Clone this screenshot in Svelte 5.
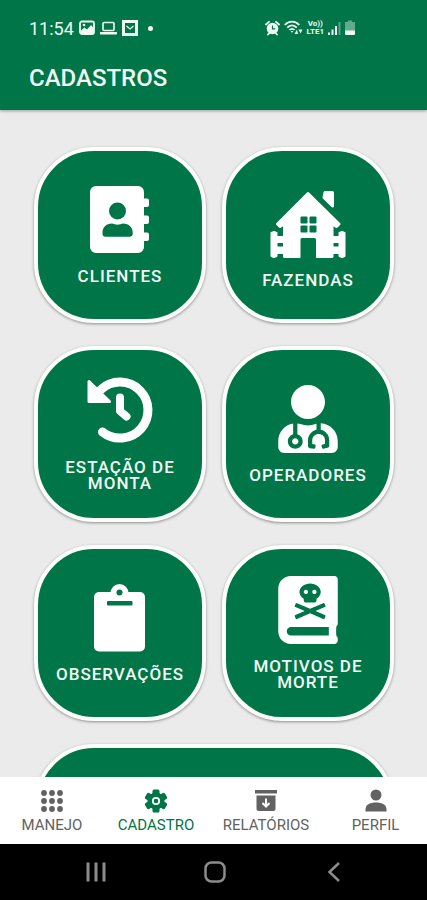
<script>
  const cards = [
    { id: 'clientes', label: 'CLIENTES' },
    { id: 'fazendas', label: 'FAZENDAS' },
    { id: 'estacao', label: 'ESTAÇÃO DE MONTA' },
    { id: 'operadores', label: 'OPERADORES' },
    { id: 'observacoes', label: 'OBSERVAÇÕES' },
    { id: 'motivos', label: 'MOTIVOS DE MORTE' }
  ];
  const tabs = [
    { id: 'manejo', label: 'MANEJO' },
    { id: 'cadastro', label: 'CADASTRO' },
    { id: 'relatorios', label: 'RELATÓRIOS' },
    { id: 'perfil', label: 'PERFIL' }
  ];
  let active = $state('cadastro');
</script>

<div class="app">
  <header>
    <div class="status">
      <div class="left">
        <span class="time">11:54</span>
        <svg width="16" height="16" viewBox="0 0 16 16">
          <rect x="1" y="1.5" width="14" height="12.5" rx="2" fill="none" stroke="currentColor" stroke-width="1.8" />
          <path d="M2 13V10.500l3.500-3 2.500 2 4-4.500 2.500 3V13z" fill="currentColor" />
          <circle cx="5" cy="5" r="1.300" fill="currentColor" />
        </svg>
        <svg width="17" height="16" viewBox="0 0 17 16">
          <rect x="3" y="2.500" width="11" height="8" rx="1" fill="none" stroke="currentColor" stroke-width="1.600" />
          <path d="M0 12h17v2.500H0z" fill="currentColor" />
        </svg>
        <svg width="16" height="16" viewBox="0 0 16 16">
          <rect x="1.500" y="1.500" width="13" height="13" fill="none" stroke="currentColor" stroke-width="3" />
          <path d="M4.500 6l3.500 3 3.500-3" fill="none" stroke="currentColor" stroke-width="1.200" />
        </svg>
        <i class="dot"></i>
      </div>
      <div class="right">
        <svg width="15" height="16" viewBox="0 0 15 16">
          <circle cx="7.500" cy="8.500" r="5.800" fill="currentColor" />
          <path d="M1 4.500L4 1.800M14 4.500L11 1.800M3 14.500l1.800-2M12 14.500l-1.800-2" stroke="currentColor" stroke-width="1.800" stroke-linecap="round" />
          <path d="M7.500 5.500v3.300h2.700" fill="none" stroke="#007548" stroke-width="1.200" />
        </svg>
        <svg width="19" height="16" viewBox="0 0 19 16">
          <g fill="none" stroke="currentColor" stroke-width="1.800">
            <path d="M.8 5c4-4.600 10.400-4.600 14.400 0" />
            <path d="M3.300 7.600c2.700-3 6.700-3 9.400 0" />
            <path d="M5.500 10c1.400-1.600 3.600-1.600 5 0" />
          </g>
          <path d="M6.800 11h2.400L8 13zM10.500 14l2.500-4.500 1 4.500zM14.500 9.500h4l-2 4z" fill="currentColor" />
        </svg>
        <span class="lte">Vo))<br />LTE1</span>
        <svg width="13" height="16" viewBox="0 0 13 16" fill="currentColor">
          <path d="M0 12.500h2V15H0zM3.500 9.500h2V15h-2zM7 6h2v9H7z" />
          <path d="M10.500 2h2v13h-2z" opacity=".35" />
        </svg>
        <svg width="10" height="16" viewBox="0 0 10 16" fill="currentColor">
          <path d="M3 .5h4V2h3v9H0V2h3z" opacity=".4" />
          <path d="M0 10.500h10V14a1 1 0 0 1-1 1H1a1 1 0 0 1-1-1z" />
        </svg>
      </div>
    </div>
    <h1>CADASTROS</h1>
  </header>

  <main>
    {#each cards as card (card.id)}
      <button class="card" type="button">
        {#if card.id === 'clientes'}
          <svg width="68" height="68" viewBox="0 0 68 68">
            <path fill="currentColor" d="M10 0h42a6 6 0 0 1 6 6v6.500h3a2 2 0 0 1 2 2V19a2 2 0 0 1-2 2h-3v8.500h3a2 2 0 0 1 2 2V36a2 2 0 0 1-2 2h-3v8.500h3a2 2 0 0 1 2 2V53a2 2 0 0 1-2 2h-3v6a6 6 0 0 1-6 6H10a6 6 0 0 1-6-6V6a6 6 0 0 1 6-6z" />
            <g fill="#007548">
              <circle cx="31.500" cy="25" r="8.500" />
              <path d="M26 37.500c3.500 1.500 7.500 1.500 11 0 6 0 9.700 4 9.700 9V48c0 1.700-1.300 2.700-3 2.700H19.500c-1.700 0-3-1-3-2.700v-1.500c0-5 3.500-9 9.500-9z" />
            </g>
          </svg>
        {:else if card.id === 'fazendas'}
          <svg width="78" height="76" viewBox="0 0 78 76">
            <g fill="currentColor" stroke="currentColor" stroke-linejoin="round">
              <path stroke-width="3" d="M39 11.500L8.500 42l2.500 2.500 4.500-3V74.500H31V56h16.500v18.500H63v-33l4.500 3L70 42z" />
              <path stroke-width="3" d="M56 10.500h7.500V24L55 15.500z" />
              <path stroke-width="2" d="M2.500 51L5 50l2.500 1v4H14v5H7.500v5.500H14V71H7.500v3L5 75l-2.500-1zM75.500 51L73 50l-2.500 1v4H64v5h6.500v5.500H64V71h6.500v3l2.500 1 2.500-1z" />
            </g>
            <g fill="#007548">
              <rect x="31.500" y="34.500" width="7" height="7" rx="1" />
              <rect x="40.500" y="34.500" width="7" height="7" rx="1" />
              <rect x="31.500" y="43.500" width="7" height="7" rx="1" />
              <rect x="40.500" y="43.500" width="7" height="7" rx="1" />
              <path d="M31.500 57.500a1.500 1.500 0 0 1 1.500-1.500h12.500a1.500 1.500 0 0 1 1.500 1.500V76H31.500z" />
            </g>
          </svg>
        {:else if card.id === 'estacao'}
          <svg width="68" height="68" viewBox="0 0 68 68">
            <g fill="none" stroke="currentColor" stroke-width="9" stroke-linecap="round" stroke-linejoin="round">
              <path d="M15 12.500A28 28 0 1 1 16.500 55" />
              <path d="M34 20.500V34l6.500 5.500" stroke-width="8" />
            </g>
            <path d="M3 4.500v20h20.500z" fill="currentColor" stroke="currentColor" stroke-width="3" stroke-linejoin="round" />
          </svg>
        {:else if card.id === 'operadores'}
          <svg width="68" height="68" viewBox="-32 0 512 512">
            <path fill="currentColor" d="M224 256c70.700 0 128-57.300 128-128S294.700 0 224 0 96 57.300 96 128s57.300 128 128 128zM104 424c0 13.300 10.700 24 24 24s24-10.700 24-24-10.700-24-24-24-24 10.700-24 24zm216-135.400v49c36.500 7.400 64 39.800 64 78.400v41.700c0 7.600-5.400 14.200-12.900 15.700l-32.200 6.400c-4.300.9-8.500-1.900-9.400-6.300l-3.100-15.700c-.9-4.300 1.900-8.600 6.300-9.400l19.300-3.900V416c0-62.800-96-65.100-96 1.900v26.700l19.300 3.900c4.300.9 7.100 5.100 6.300 9.400l-3.100 15.700c-.9 4.300-5.100 7.100-9.400 6.300l-31.200-4.200c-7.900-1.100-13.800-7.800-13.800-15.900V416c0-38.600 27.500-70.900 64-78.400v-45.200c-2.200.7-4.400 1.100-6.600 1.900-18 6.300-37.300 9.800-57.400 9.800s-39.400-3.500-57.400-9.800c-7.400-2.600-14.900-4.200-22.600-5.200v81.600c23.100 6.900 40 28.100 40 53.400 0 30.900-25.100 56-56 56s-56-25.100-56-56c0-25.300 16.900-46.500 40-53.400v-80.400C48.500 301 0 355.800 0 422.400v44.800C0 491.900 20.100 512 44.800 512h358.400c24.700 0 44.800-20.100 44.800-44.800v-44.800c0-72-56.800-130.300-128-133.800z" />
          </svg>
        {:else if card.id === 'observacoes'}
          <svg width="68" height="68" viewBox="0 0 68 68">
            <rect x="8" y="8" width="51" height="59.500" rx="5" fill="currentColor" />
            <circle cx="33.500" cy="9" r="9" fill="currentColor" />
            <circle cx="33.500" cy="8.500" r="3" fill="#007548" />
            <rect x="21" y="17" width="25.500" height="4.500" rx="1" fill="#007548" />
          </svg>
        {:else}
          <svg width="68" height="68" viewBox="-32 0 512 512">
            <path fill="currentColor" d="M272 136c8.800 0 16-7.200 16-16s-7.200-16-16-16-16 7.200-16 16 7.200 16 16 16zm176 222.400V25.600c0-16-9.600-25.600-25.600-25.600H96C41.600 0 0 41.600 0 96v320c0 54.400 41.600 96 96 96h326.400c12.800 0 25.600-9.600 25.600-25.600v-16c0-6.400-3.200-12.800-9.600-19.200-3.200-16-3.200-60.800 0-73.600 6.400-3.200 9.600-9.600 9.600-19.200zM240 56c44.200 0 80 28.700 80 64 0 20.900-12.700 39.200-32 50.900V184c0 8.800-7.200 16-16 16h-64c-8.800 0-16-7.200-16-16v-13.100c-19.300-11.700-32-30-32-50.900 0-35.300 35.800-64 80-64zM124.800 223.300l6.300-14.700c1.700-4.100 6.400-5.900 10.500-4.200l98.300 42.100 98.400-42.100c4.100-1.700 8.800.1 10.500 4.200l6.300 14.700c1.700 4.100-.1 8.800-4.200 10.500L280.600 264l70.300 30.100c4.100 1.700 5.900 6.400 4.200 10.500l-6.300 14.700c-1.700 4.100-6.400 5.900-10.500 4.200L240 281.400l-98.300 42.200c-4.100 1.700-8.800-.1-10.500-4.200l-6.300-14.700c-1.700-4.100.1-8.800 4.200-10.500l70.400-30.100-71-30.300c-4.100-1.700-5.900-6.400-4.200-10.500zm256 224.700H96c-19.200 0-32-12.800-32-32s16-32 32-32h284.800zM208 136c8.800 0 16-7.200 16-16s-7.200-16-16-16-16 7.200-16 16 7.200 16 16 16z" />
          </svg>
        {/if}
        <span class="label">{card.label}</span>
      </button>
    {/each}
    <button class="card wide" type="button" aria-label="Mais cadastros"></button>
  </main>

  <nav class="tabs">
    {#each tabs as tab (tab.id)}
      <button type="button" class:active={active === tab.id} onclick={() => (active = tab.id)}>
        <svg width="24" height="24" viewBox="0 0 24 24" fill="currentColor">
          {#if tab.id === 'manejo'}
            {#each [4, 12, 20] as cy}
              {#each [4, 12, 20] as cx}
                <circle {cx} {cy} r="2.900" />
              {/each}
            {/each}
          {:else if tab.id === 'cadastro'}
            <circle cx="12" cy="12" r="8.500" />
            {#each [0, 60, 120, 180, 240, 300] as turn}
              <rect x="8.500" y=".5" width="7" height="7" rx="1.500" transform="rotate({turn} 12 12)" />
            {/each}
            <circle cx="12" cy="12" r="3.200" fill="none" stroke="#fff" stroke-width="1.800" />
          {:else if tab.id === 'relatorios'}
            <path d="M1 1h22v3.500H1zM2.500 6.500h19V20a2 2 0 0 1-2 2h-15a2 2 0 0 1-2-2z" />
            <path d="M12 9.500v7.500M8.500 14l3.500 3.500 3.500-3.500" fill="none" stroke="#fff" stroke-width="2" />
          {:else}
            <circle cx="12" cy="6" r="5.500" />
            <path d="M1.500 22.500v-2c0-4.500 4-7 10.500-7s10.500 2.500 10.500 7v2z" />
          {/if}
        </svg>
        <span>{tab.label}</span>
      </button>
    {/each}
  </nav>

  <div class="system">
    <button type="button" aria-label="Recentes">
      <svg width="24" height="24" viewBox="0 0 24 24"><path d="M4 2.500v19M12 2.500v19M20 2.500v19" stroke-width="3" /></svg>
    </button>
    <button type="button" aria-label="Início">
      <svg width="24" height="24" viewBox="0 0 24 24"><rect x="2.500" y="2.500" width="19" height="19" rx="6" stroke-width="2.500" /></svg>
    </button>
    <button type="button" aria-label="Voltar">
      <svg width="24" height="24" viewBox="0 0 24 24"><path d="M17 3L7.500 12l9.500 9" stroke-width="2.500" /></svg>
    </button>
  </div>
</div>

<style>
  :global(body) {
    margin: 0;
  }
  .app {
    display: flex;
    flex-direction: column;
    height: 100vh;
    background: #ebebeb;
    font-family: Roboto, "Liberation Sans", sans-serif;
  }
  button {
    margin: 0;
    padding: 0;
    border: 0;
    background: none;
    font: inherit;
    cursor: pointer;
  }
  svg {
    display: block;
    flex: none;
  }
  header {
    position: relative;
    padding: 16px 29px 18px;
    background: #007548;
    color: #f1faf4;
    box-shadow: 0 1px 3px rgba(0, 0, 0, 0.35);
  }
  .status {
    display: flex;
    justify-content: space-between;
    height: 24px;
    padding-right: 43px;
  }
  .left,
  .right {
    display: flex;
    align-items: center;
    gap: 5px;
  }
  .right {
    gap: 4px;
  }
  .time {
    font-size: 18px;
  }
  .dot {
    width: 5px;
    height: 5px;
    margin-left: 5px;
    border-radius: 50%;
    background: currentColor;
  }
  .lte {
    font-size: 8px;
    line-height: 8px;
    font-weight: 700;
    text-align: center;
  }
  h1 {
    margin: 24px 0 0;
    font-size: 24px;
    line-height: 28px;
    font-weight: 500;
  }
  main {
    flex: 1;
    min-height: 0;
    overflow-y: auto;
    scrollbar-width: none;
    display: grid;
    grid-template-columns: 1fr 1fr;
    align-content: start;
    gap: 23px 16px;
    padding: 37px 33px 37px 34px;
  }
  .card {
    display: flex;
    flex-direction: column;
    align-items: center;
    justify-content: center;
    gap: 14px;
    box-sizing: border-box;
    min-height: 176px;
    border: 4px solid #fcfefc;
    border-radius: 60px;
    background: #007548;
    color: #fff;
    box-shadow: 0 1px 3px rgba(0, 0, 0, 0.4);
  }
  .wide {
    grid-column: 1 / -1;
  }
  .label {
    max-width: 136px;
    color: #f1faf4;
    font-size: 17px;
    line-height: 16px;
    font-weight: 500;
    letter-spacing: 1px;
    text-align: center;
  }
  .tabs {
    display: grid;
    grid-template-columns: 104fr 104fr 116fr 103fr;
    padding: 12px 0 10px;
    background: #fff;
  }
  .tabs button {
    display: flex;
    flex-direction: column;
    align-items: center;
    gap: 4px;
    color: #626262;
    font-size: 15px;
    line-height: 17px;
  }
  .tabs .active {
    color: #007548;
  }
  .system {
    display: grid;
    grid-template-columns: repeat(3, 28%);
    justify-content: center;
    height: 56px;
    padding-left: 2px;
    background: #000;
  }
  .system button {
    display: grid;
    place-items: center;
  }
  .system svg {
    fill: none;
    stroke: #8c8c8c;
  }
</style>
